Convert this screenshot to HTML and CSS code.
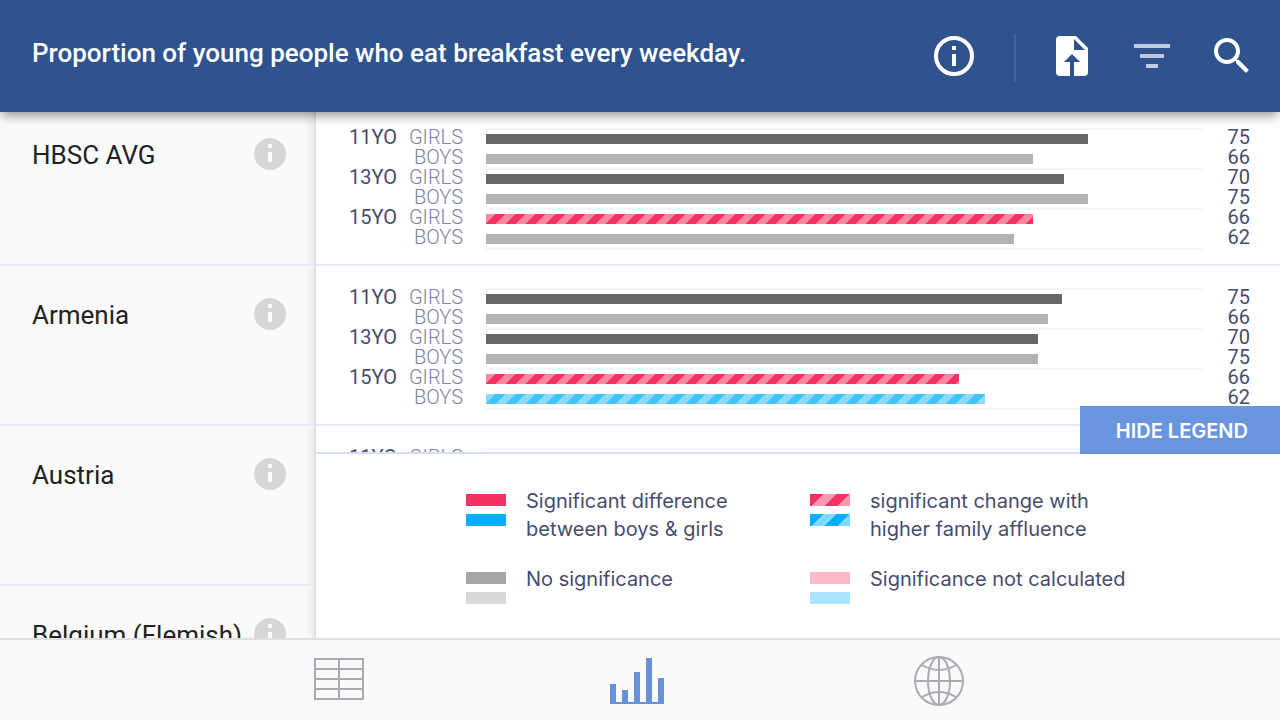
FILE: index.html
```html
<!DOCTYPE html>
<html lang="en">
<head>
<meta charset="utf-8">
<meta name="viewport" content="width=device-width, initial-scale=1">
<title>Breakfast every weekday</title>
<link rel="stylesheet" href="styles.css">
</head>
<body>
<svg class="defs" aria-hidden="true">
  <symbol id="info" viewBox="0 0 32 32"><circle cx="16" cy="16" r="16" fill="#d5d6d8"/><path fill="#fff" d="M14 6h4v4h-4zM14 14h4v10h-4z"/></symbol>
</svg>

<header class="topbar">
  <h1 class="topbar-title">Proportion of young people who eat breakfast every weekday.</h1>
  <div class="actions">
    <button class="icon-btn" type="button" aria-label="Information"><svg viewBox="0 0 48 48"><circle cx="24" cy="24" r="18" fill="none" stroke="#fff" stroke-width="4"/><path fill="#fff" d="M22 14h4v4h-4zM22 22h4v12h-4z"/></svg></button>
    <span class="divider"></span>
    <button class="icon-btn" type="button" aria-label="Export"><svg viewBox="0 0 48 48"><path fill="#fff" fill-rule="evenodd" d="M12 4h16l12 12v24a4 4 0 0 1-4 4H26V30h6l-8-8-8 8h6v14H12a4 4 0 0 1-4-4V8a4 4 0 0 1 4-4zM26 7v11h11z"/></svg></button>
    <button class="icon-btn" type="button" aria-label="Filter"><svg viewBox="0 0 48 48"><path fill="#c0cbe0" d="M6 12h36v4H6zM12 22h24v4H12zM18 32h12v4H18z"/></svg></button>
    <button class="icon-btn" type="button" aria-label="Search"><svg viewBox="0 0 48 48"><path fill="#fff" d="M31 28h-1.580l-.550-.550C30.820 25.180 32 22.230 32 19c0-7.180-5.820-13-13-13S6 11.820 6 19s5.820 13 13 13c3.230 0 6.180-1.180 8.450-3.130l.550.550V31l10 9.980L40.980 38 31 28zm-12 0c-4.970 0-9-4.030-9-9s4.030-9 9-9 9 4.030 9 9-4.030 9-9 9z"/></svg></button>
  </div>
</header>

<main class="main">
  <aside class="countries">
    <div class="country"><span>HBSC AVG</span><button class="info-btn" type="button" aria-label="About HBSC AVG"><svg><use href="#info"/></svg></button></div>
    <div class="country"><span>Armenia</span><button class="info-btn" type="button" aria-label="About Armenia"><svg><use href="#info"/></svg></button></div>
    <div class="country"><span>Austria</span><button class="info-btn" type="button" aria-label="About Austria"><svg><use href="#info"/></svg></button></div>
    <div class="country"><span>Belgium (Flemish)</span><button class="info-btn" type="button" aria-label="About Belgium (Flemish)"><svg><use href="#info"/></svg></button></div>
  </aside>

  <div class="content">
    <div class="charts">
      <section class="chart">
        <div class="labels"><b>11YO</b><span>GIRLS</span><b></b><span>BOYS</span><b>13YO</b><span>GIRLS</span><b></b><span>BOYS</span><b>15YO</b><span>GIRLS</span><b></b><span>BOYS</span></div>
        <div class="plot">
          <div class="pair"><div class="bar dark" style="width:84.1%"></div><div class="bar grey" style="width:76.4%"></div></div>
          <div class="pair"><div class="bar dark" style="width:80.7%"></div><div class="bar grey" style="width:84.1%"></div></div>
          <div class="pair"><div class="bar pink-stripe" style="width:76.4%"></div><div class="bar grey" style="width:73.8%"></div></div>
        </div>
        <div class="values"><span>75</span><span>66</span><span>70</span><span>75</span><span>66</span><span>62</span></div>
      </section>
      <section class="chart">
        <div class="labels"><b>11YO</b><span>GIRLS</span><b></b><span>BOYS</span><b>13YO</b><span>GIRLS</span><b></b><span>BOYS</span><b>15YO</b><span>GIRLS</span><b></b><span>BOYS</span></div>
        <div class="plot">
          <div class="pair"><div class="bar dark" style="width:80.4%"></div><div class="bar grey" style="width:78.5%"></div></div>
          <div class="pair"><div class="bar dark" style="width:77.1%"></div><div class="bar grey" style="width:77.1%"></div></div>
          <div class="pair"><div class="bar pink-stripe" style="width:66%"></div><div class="bar blue-stripe" style="width:69.7%"></div></div>
        </div>
        <div class="values"><span>75</span><span>66</span><span>70</span><span>75</span><span>66</span><span>62</span></div>
      </section>
      <section class="chart">
        <div class="labels"><b>11YO</b><span>GIRLS</span></div>
        <div class="plot"><div class="pair"></div></div>
        <div class="values"></div>
      </section>
    </div>

    <section class="legend" aria-label="Legend">
      <button class="legend-toggle" type="button">HIDE LEGEND</button>
      <div class="legend-item"><div class="swatches"><i class="pink"></i><i class="blue"></i></div><p>Significant difference<br>between boys &amp; girls</p></div>
      <div class="legend-item"><div class="swatches"><i class="pink-wide"></i><i class="blue-wide"></i></div><p>significant change with<br>higher family affluence</p></div>
      <div class="legend-item"><div class="swatches"><i class="mid-grey"></i><i class="pale-grey"></i></div><p>No significance</p></div>
      <div class="legend-item"><div class="swatches"><i class="pale-pink"></i><i class="pale-blue"></i></div><p>Significance not calculated</p></div>
    </section>
  </div>
</main>

<nav class="tabs">
  <button class="tab" type="button" aria-label="Table"><svg width="50" height="46" fill="none" stroke="#a9abb3" stroke-width="2"><path d="M1 1h48v40H1zM25 1v40M1 11h48M1 21h48M1 31h48"/></svg></button>
  <button class="tab" type="button" aria-label="Bar chart"><svg width="58" height="46" fill="#6692dd"><path d="M0 26h6v18h6V32h6v12h6V14h6v30h6V0h6v44h6V20h6v26H0z"/></svg></button>
  <button class="tab" type="button" aria-label="Map"><svg width="50" height="50" fill="none" stroke="#a9abb3" stroke-width="2"><circle cx="25" cy="25" r="24"/><ellipse cx="25" cy="25" rx="11" ry="24"/><path d="M25 1v48M1 25h48M8 9Q25 19 42 9M8 41Q25 31 42 41"/></svg></button>
</nav>
</body>
</html>
```
FILE: styles.css
```css
* { box-sizing: border-box; }
body {
  margin: 0;
  height: 100vh;
  display: flex;
  flex-direction: column;
  overflow: hidden;
  font-family: Roboto, "Liberation Sans", sans-serif;
  background: #fff;
}
button {
  padding: 0;
  border: 0;
  background: none;
  font: inherit;
  cursor: pointer;
}
svg { display: block; }
.defs { display: none; }

.topbar {
  flex: none;
  position: relative;
  z-index: 2;
  display: flex;
  align-items: center;
  justify-content: space-between;
  padding: 30px 24px 30px 32px;
  background: #2f538f;
  box-shadow: 0 6px 10px -2px rgba(0, 0, 0, .4);
}
.topbar-title {
  margin: 0;
  padding-bottom: 6px;
  font-size: 26px;
  line-height: 32px;
  font-weight: 500;
  color: #fff;
}
.actions { display: flex; align-items: center; gap: 32px; }
.icon-btn { width: 48px; height: 48px; }
.divider { width: 2px; height: 48px; margin: 4px 0 0 4px; background: #45639a; }

.main { flex: 1; min-height: 0; display: flex; }
.countries {
  flex: none;
  width: 316px;
  overflow: hidden;
  background: #fafafa;
  border-right: 2px solid #e1e1e2;
  box-shadow: inset -12px 0 12px -10px rgba(0, 0, 0, .08);
}
.country {
  display: flex;
  align-items: flex-start;
  justify-content: space-between;
  height: 160px;
  padding: 32px 28px 0 32px;
  border-bottom: 2px solid #e6e8f5;
  font-size: 26px;
  line-height: 34px;
  color: #222;
  white-space: nowrap;
}
.country:first-child { height: 154px; padding-top: 26px; }
.info-btn, .info-btn svg { width: 32px; height: 32px; }

.content { flex: 1; min-width: 0; display: flex; flex-direction: column; }
.charts { flex: 1; min-height: 0; overflow: hidden; }
.chart {
  display: grid;
  grid-template-columns: 148px 1fr 26px;
  column-gap: 22px;
  height: 160px;
  padding: 21px 30px 0 0;
  border-bottom: 2px solid #e6e8f5;
  font-size: 20px;
  line-height: 20px;
  color: #474c6e;
}
.chart:first-child { height: 154px; padding-top: 15px; }
.labels {
  display: grid;
  grid-template-columns: 81px 66px;
  grid-auto-rows: 20px;
  align-content: start;
  text-align: right;
}
.labels b { font-weight: 400; }
.labels span { font-weight: 300; color: #7d829e; }
.values { display: grid; grid-auto-rows: 20px; align-content: start; text-align: right; }
.plot { padding-top: 1px; }
.pair {
  display: flex;
  flex-direction: column;
  gap: 10px;
  height: 40px;
  padding-top: 4px;
  border-top: 2px solid #f3f4f9;
}
.pair:last-child { height: 42px; border-bottom: 2px solid #f3f4f9; }
.bar { height: 10px; flex: none; }
.dark { background: #666; }
.grey { background: #b1b2b6; }
.pink-stripe, .blue-stripe { background-size: 20px 20px; }
.pink-stripe { background-image: linear-gradient(135deg, #ff85a1 25%, #f53063 25% 50%, #ff85a1 50% 75%, #f53063 75%); }
.blue-stripe { background-image: linear-gradient(135deg, #8bdafd 25%, #40c2fd 25% 50%, #8bdafd 50% 75%, #40c2fd 75%); }

.legend {
  flex: none;
  position: relative;
  display: grid;
  grid-template-columns: 344px 320px;
  justify-content: center;
  row-gap: 22px;
  padding: 33px 0 17px;
  border-top: 2px solid #d3dff5;
  background: #fff;
  font-family: Inter, "Liberation Sans", sans-serif;
  font-size: 20px;
  line-height: 28px;
  color: #474c6e;
}
.legend-toggle {
  position: absolute;
  right: 0;
  bottom: 100%;
  min-width: 200px;
  padding: 11px 32px 9px;
  font-weight: 600;
  text-align: right;
  color: #fff;
  background: #6995de;
}
.legend-item { display: flex; align-items: flex-start; gap: 20px; min-height: 56px; }
.legend-item p { margin: 0; white-space: nowrap; }
.swatches { display: grid; gap: 8px; padding-top: 7px; }
.swatches i { width: 40px; height: 12px; background-size: 26px 26px; }
.pink { background: #f53063; }
.blue { background: #00aeff; }
.pink-wide { background-image: linear-gradient(135deg, #f53063 25%, #fb97b0 25% 50%, #f53063 50% 75%, #fb97b0 75%); }
.blue-wide { background-image: linear-gradient(135deg, #00aeff 25%, #80d7ff 25% 50%, #00aeff 50% 75%, #80d7ff 75%); }
.mid-grey { background: #a6a6a8; }
.pale-grey { background: #d8d8d8; }
.pale-pink { background: #fbbac8; }
.pale-blue { background: #aae4ff; }

.tabs {
  flex: none;
  position: relative;
  z-index: 1;
  display: flex;
  align-items: center;
  justify-content: center;
  gap: 246px;
  height: 82px;
  padding: 2px 2px 0 0;
  border-top: 2px solid #dedfe0;
  background: #fafafa;
}
```
